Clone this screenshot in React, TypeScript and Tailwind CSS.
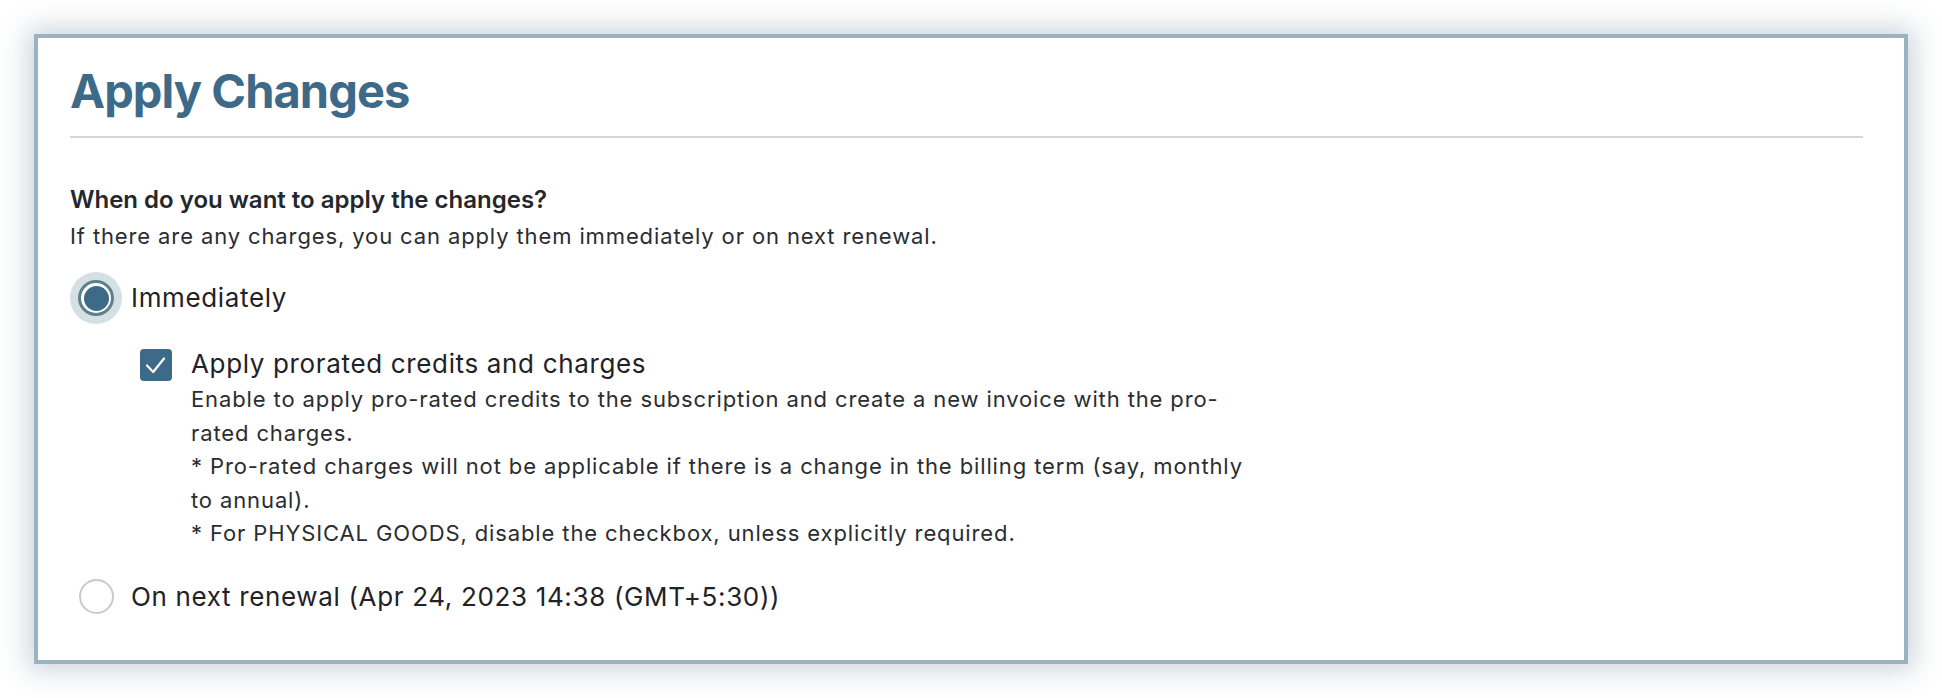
const FONT = "font-['Inter','Noto_Sans',sans-serif]";

function Radio({ checked }: { checked: boolean }) {
  return (
    <span className="flex h-[52px] w-[52px] shrink-0 items-center justify-center rounded-full">
      {checked ? (
        <span className="flex h-[52px] w-[52px] items-center justify-center rounded-full bg-[#d4e0e3]">
          <span className="flex h-9 w-9 items-center justify-center rounded-full border-[3px] border-[#5d8189] bg-white">
            <span className="h-[25px] w-[25px] rounded-full bg-[#3e6a89]" />
          </span>
        </span>
      ) : (
        <span className="h-[35px] w-[35px] rounded-full border-[2.5px] border-[#c6c9d0] bg-white" />
      )}
    </span>
  );
}

export default function App() {
  return (
    <div className={`min-h-screen bg-white p-[34px] ${FONT}`}>
      <div className="h-[630px] border-4 border-[#9bb3c0] bg-white pl-8 pr-[41px] pt-6 shadow-[0_0_26px_6px_rgba(70,100,125,0.28)]">
        <h1 className="text-[47px] font-bold leading-[58px] tracking-[-0.02em] text-[#3e6a89]">Apply Changes</h1>
        <div className="mt-4 h-[2px] bg-[#d6d6d6]" />

        <h2 className="mt-[47px] text-[24px] font-semibold leading-[30px] text-[#24272b]">
          When do you want to apply the changes?
        </h2>
        <p className="mt-[6px] text-[22px] leading-[30px] tracking-[0.04em] text-[#2a2d31]">
          If there are any charges, you can apply them immediately or on next renewal.
        </p>

        <label className="mt-[21px] flex items-center gap-[9px]">
          <Radio checked />
          <span className="text-[26px] leading-8 tracking-[0.025em] text-[#1f2226]">Immediately</span>
        </label>

        <div className="mt-[24px] flex items-start gap-[19px] pl-[70px]">
          <span className="mt-px flex h-8 w-8 shrink-0 rounded-[4px] bg-[#3e6a89]">
            <svg viewBox="0 0 32 32" className="h-8 w-8" fill="none">
              <polyline
                points="7,16.5 13.2,23 24,9.5"
                stroke="white"
                strokeWidth="2.2"
                strokeLinecap="round"
                strokeLinejoin="round"
              />
            </svg>
          </span>
          <div>
            <div className="text-[26px] leading-8 tracking-[0.025em] text-[#1f2226]">
              Apply prorated credits and charges
            </div>
            <p className="mt-[3px] text-[22px] leading-[33.5px] tracking-[0.04em] text-[#2a2d31]">
              Enable to apply pro-rated credits to the subscription and create a new invoice with the pro-
              <br />
              rated charges.
              <br />
              * Pro-rated charges will not be applicable if there is a change in the billing term (say, monthly
              <br />
              to annual).
              <br />* For PHYSICAL GOODS, disable the checkbox, unless explicitly required.
            </p>
          </div>
        </div>

        <label className="mt-[20px] flex items-center gap-[9px]">
          <Radio checked={false} />
          <span className="text-[26px] leading-8 tracking-[0.025em] text-[#1f2226]">
            On next renewal (Apr 24, 2023 14:38 (GMT+5:30))
          </span>
        </label>
      </div>
    </div>
  );
}
